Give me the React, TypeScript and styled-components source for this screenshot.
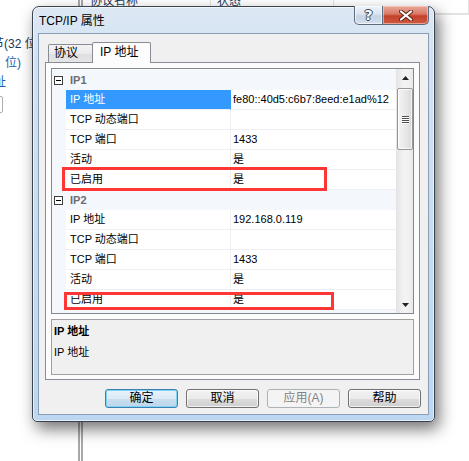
import React from "react";
import styled, { createGlobalStyle, css } from "styled-components";

const GlobalStyle = createGlobalStyle`
  html, body { margin: 0; padding: 0; background: #fff; }
  body { font-family: "Liberation Sans", "Noto Sans CJK SC", sans-serif; }
  * { box-sizing: border-box; }
`;

const CJK = `"Liberation Sans", "Noto Sans CJK SC", sans-serif`;

const Desktop = styled.div`
  position: relative;
  width: 469px;
  height: 461px;
  overflow: hidden;
  background: #fff;
  display: flex;
  font-family: ${CJK};
`;

/* ---------- background window (behind the dialog) ---------- */
const LeftPane = styled.div`
  width: 78px;
  flex: none;
  display: flex;
  flex-direction: column;
  padding-top: 35px;
  font-size: 12px;
`;

const BgLine = styled.div<{ $indent: number; $color: string }>`
  height: 19px;
  line-height: 19px;
  margin-left: ${(p) => p.$indent}px;
  color: ${(p) => p.$color};
  white-space: nowrap;
`;

const BgTextBox = styled.div`
  margin-top: 4px;
  margin-left: -17px;
  width: 20px;
  height: 17px;
  border: 1px solid #abadb3;
  border-radius: 2px;
  background: #fff;
`;

const ListPane = styled.div`
  flex: 1;
  border-left: 5px double #a8a8a8;
  display: flex;
  flex-direction: column;
`;

const ListHeader = styled.div`
  display: flex;
  height: 15px;
  border-bottom: 2px solid #e3e3e3;
`;

const HeaderCell = styled.div<{ $w?: number; $pad: number }>`
  ${(p) => (p.$w ? `width: ${p.$w}px; flex: none;` : "flex: 1;")}
  border-right: 1px solid #e3e3e3;
  padding-left: ${(p) => p.$pad}px;
  font-size: 12px;
  line-height: 2px;
  color: #1e395b;
  white-space: nowrap;
`;

/* ---------- dialog ---------- */
const Dialog = styled.div`
  position: absolute;
  left: 32px;
  top: 6px;
  width: 403px;
  height: 416px;
  border: 1px solid #39444f;
  border-radius: 7px 7px 5px 5px;
  background: linear-gradient(180deg, #dde8f4 0%, #d3e2f2 12%, #c7dcf1 55%, #bcd7f1 100%);
  box-shadow: 4px 7px 16px rgba(0, 0, 0, 0.55), inset 0 0 0 1px rgba(255, 255, 255, 0.6);
  display: flex;
  flex-direction: column;
  padding: 0 5px 6px 5px;
`;

const TitleBar = styled.div`
  height: 26px;
  display: flex;
  align-items: flex-start;
  padding-left: 1px;
`;

const Title = styled.div`
  padding-top: 1px;
  line-height: 26px;
  font-size: 12px;
  color: #000;
`;

const CaptionButtons = styled.div`
  margin-left: auto;
  margin-top: -1px;
  display: flex;
`;

const CaptionButton = styled.div<{ $close?: boolean }>`
  height: 19px;
  width: ${(p) => (p.$close ? 46 : 29)}px;
  display: flex;
  align-items: center;
  justify-content: center;
  border: 1px solid #5d6d80;
  border-top: none;
  ${(p) =>
    p.$close
      ? css`
          border-left: none;
          border-radius: 0 0 5px 0;
          background: linear-gradient(180deg, #e9a99a 0%, #d97865 45%, #c4412a 55%, #d05a41 100%);
          box-shadow: inset 0 0 0 1px rgba(255, 220, 210, 0.55);
        `
      : css`
          border-radius: 0 0 0 5px;
          background: linear-gradient(180deg, #eef3f9 0%, #dbe4ef 45%, #c6d3e3 55%, #d4dfec 100%);
          box-shadow: inset 0 0 0 1px rgba(255, 255, 255, 0.6);
        `}
`;

const HelpGlyph = styled.span`
  font: bold 14px "DejaVu Sans", sans-serif;
  color: #fff;
  line-height: 14px;
  text-shadow: 0 0 1px #3a4656, 1px 0 0 #3a4656, -1px 0 0 #3a4656, 0 1px 0 #3a4656, 0 -1px 0 #3a4656;
`;

const Client = styled.div`
  flex: 1;
  background: #f0f0f0;
  border: 1px solid #8a9db4;
  display: flex;
  flex-direction: column;
`;

const TabControl = styled.div`
  margin: 8px 8px 0 6px;
  height: 338px;
  display: flex;
  flex-direction: column;
`;

const TabStrip = styled.div`
  height: 20px;
  display: flex;
  align-items: flex-end;
  padding-left: 3px;
`;

const Tab = styled.div<{ $active?: boolean; $w: number; $pad: number }>`
  width: ${(p) => p.$w}px;
  padding-left: ${(p) => p.$pad}px;
  border: 1px solid #898c95;
  border-bottom: none;
  border-radius: 2px 2px 0 0;
  font-size: 12px;
  color: #000;
  white-space: nowrap;
  ${(p) =>
    p.$active
      ? css`
          height: 21px;
          line-height: 19px;
          margin-bottom: -1px;
          margin-left: -1px;
          background: #fcfcfc;
          position: relative;
          z-index: 1;
        `
      : css`
          height: 18px;
          line-height: 17px;
          background: linear-gradient(180deg, #f3f3f3 0%, #ebebeb 50%, #dedede 51%, #e5e5e5 100%);
        `}
`;

const TabPanel = styled.div`
  flex: 1;
  border: 1px solid #898c95;
  background: #fcfcfc;
  padding: 5px 5px 4px 5px;
  display: flex;
  flex-direction: column;
  gap: 5px;
`;

const Grid = styled.div`
  position: relative;
  height: 246px;
  border: 1px solid #828790;
  background: #fff;
  display: flex;
  overflow: hidden;
`;

const GridBody = styled.div`
  flex: 1;
  padding-top: 1px;
  display: flex;
  flex-direction: column;
  overflow: hidden;
  font-size: 11px;
`;

const CategoryRow = styled.div`
  height: 20px;
  flex: none;
  display: flex;
  align-items: center;
  background: #f4f7fc;
`;

const Expander = styled.span`
  position: relative;
  width: 9px;
  height: 9px;
  margin-left: 2px;
  margin-right: 5px;
  border: 1px solid #3c3c3c;
  background: #fff;
  flex: none;
  &::after {
    content: "";
    position: absolute;
    left: 1px;
    right: 1px;
    top: 3px;
    height: 1px;
    background: #000;
  }
`;

const CategoryLabel = styled.span`
  margin-left: 2px;
  font-weight: bold;
  color: #6d6d6d;
`;

const PropRow = styled.div`
  height: 20px;
  flex: none;
  display: flex;
`;

const Gutter = styled.div`
  width: 14px;
  flex: none;
  background: #f4f7fc;
`;

const NameCell = styled.div<{ $selected?: boolean }>`
  width: 165px;
  flex: none;
  padding-left: 4px;
  line-height: 19px;
  border-bottom: 1px solid #eef0f4;
  border-right: 1px solid #eef0f4;
  white-space: nowrap;
  color: #000;
  ${(p) =>
    p.$selected &&
    css`
      background: #3399ff;
      color: #fff;
      border-right-color: #3399ff;
    `}
`;

const ValueCell = styled.div`
  flex: 1;
  padding-left: 2px;
  line-height: 19px;
  border-bottom: 1px solid #eef0f4;
  white-space: nowrap;
  color: #000;
`;

const ScrollBar = styled.div`
  width: 17px;
  flex: none;
  display: flex;
  flex-direction: column;
  background: linear-gradient(90deg, #e6e6e6 0%, #f2f2f2 40%, #f2f2f2 70%, #e8e8e8 100%);
  border-left: 1px solid #e4e4e4;
`;

const ArrowBox = styled.div`
  height: 17px;
  flex: none;
  display: flex;
  align-items: center;
  justify-content: center;
`;

const Thumb = styled.div`
  margin: 2px 0 0 0;
  height: 62px;
  flex: none;
  border: 1px solid #979797;
  border-radius: 2px;
  background: linear-gradient(90deg, #f4f4f4 0%, #e9e9e9 50%, #d9d9d9 100%);
  box-shadow: inset 0 0 0 1px rgba(255, 255, 255, 0.7);
  display: flex;
  flex-direction: column;
  align-items: center;
  justify-content: center;
  gap: 1px;
`;

const Grip = styled.span`
  width: 7px;
  height: 1px;
  background: #4f4f4f;
  box-shadow: 0 1px 0 #fff;
`;

const Track = styled.div`
  flex: 1;
`;

const RedBox = styled.div`
  position: absolute;
  border: 3px solid #ff3636;
  pointer-events: none;
`;

const Description = styled.div`
  height: 56px;
  border: 1px solid #a0a0a0;
  background: #f0f0f0;
  padding: 3px 2px 2px 2px;
  font-size: 11px;
  color: #000;
`;

const DescTitle = styled.div`
  line-height: 16px;
  font-weight: bold;
`;

const DescText = styled.div`
  margin-top: 5px;
  line-height: 16px;
`;

const ButtonRow = styled.div`
  margin-top: 9px;
  display: flex;
  justify-content: flex-end;
  gap: 8px;
  padding-right: 7px;
`;

const Button = styled.button<{ $primary?: boolean }>`
  width: 73px;
  height: 19px;
  padding: 0;
  font: 12px ${CJK};
  line-height: 17px;
  color: #000;
  border: 1px solid #707070;
  border-radius: 3px;
  background: linear-gradient(180deg, #f2f2f2 0%, #ebebeb 50%, #dddddd 51%, #cfcfcf 100%);
  box-shadow: inset 0 0 0 1px rgba(255, 255, 255, 0.75);
  ${(p) =>
    p.$primary &&
    css`
      border-color: #3c7fb1;
      background: linear-gradient(180deg, #e9f3fb 0%, #dbeaf6 50%, #c9dfef 51%, #bdd6ea 100%);
      box-shadow: inset 0 0 0 1px #7fd3f5;
    `}
  &:disabled {
    border-color: #adb2b5;
    background: #f4f4f4;
    color: #838383;
    box-shadow: none;
  }
`;

type Prop = { name: string; value: string; selected?: boolean };
type Category = { title: string; props: Prop[] };

const categories: Category[] = [
  {
    title: "IP1",
    props: [
      { name: "IP 地址", value: "fe80::40d5:c6b7:8eed:e1ad%12", selected: true },
      { name: "TCP 动态端口", value: "" },
      { name: "TCP 端口", value: "1433" },
      { name: "活动", value: "是" },
      { name: "已启用", value: "是" },
    ],
  },
  {
    title: "IP2",
    props: [
      { name: "IP 地址", value: "192.168.0.119" },
      { name: "TCP 动态端口", value: "" },
      { name: "TCP 端口", value: "1433" },
      { name: "活动", value: "是" },
      { name: "已启用", value: "是" },
    ],
  },
  { title: "", props: [] },
];

const CloseIcon = () => (
  <svg width="14" height="11" viewBox="0 0 14 11">
    <path d="M2 1.5 L12 9.5 M12 1.5 L2 9.5" stroke="#5a2418" strokeWidth="4" strokeLinecap="round" />
    <path d="M2 1.5 L12 9.5 M12 1.5 L2 9.5" stroke="#fff" strokeWidth="2.2" strokeLinecap="round" />
  </svg>
);

const UpArrow = () => (
  <svg width="7" height="4" viewBox="0 0 7 4">
    <polygon points="3.5,0 7,4 0,4" fill="#222" />
  </svg>
);

const DownArrow = () => (
  <svg width="7" height="4" viewBox="0 0 7 4">
    <polygon points="0,0 7,0 3.5,4" fill="#222" />
  </svg>
);

export default function App() {
  return (
    <>
      <GlobalStyle />
      <Desktop>
        <LeftPane>
          <BgLine $indent={-8} $color="#1b3558">节(32 位</BgLine>
          <BgLine $indent={5} $color="#1d5fb0">位)</BgLine>
          <BgLine $indent={-6} $color="#1d5fb0">址</BgLine>
          <BgTextBox />
        </LeftPane>
        <ListPane>
          <ListHeader>
            <HeaderCell $w={128} $pad={7}>协议名称</HeaderCell>
            <HeaderCell $w={123} $pad={6}>状态</HeaderCell>
            <HeaderCell $pad={6} />
          </ListHeader>
        </ListPane>

        <Dialog>
          <TitleBar>
            <Title>TCP/IP 属性</Title>
            <CaptionButtons>
              <CaptionButton>
                <HelpGlyph>?</HelpGlyph>
              </CaptionButton>
              <CaptionButton $close>
                <CloseIcon />
              </CaptionButton>
            </CaptionButtons>
          </TitleBar>
          <Client>
            <TabControl>
              <TabStrip>
                <Tab $w={45} $pad={5}>协议</Tab>
                <Tab $active $w={59} $pad={7}>IP 地址</Tab>
              </TabStrip>
              <TabPanel>
                <Grid>
                  <GridBody>
                    {categories.map((cat, ci) => (
                      <React.Fragment key={ci}>
                        <CategoryRow>
                          <Expander />
                          {cat.title && <CategoryLabel>{cat.title}</CategoryLabel>}
                        </CategoryRow>
                        {cat.props.map((p, i) => (
                          <PropRow key={ci + "-" + i}>
                            <Gutter />
                            <NameCell $selected={p.selected}>{p.name}</NameCell>
                            <ValueCell>{p.value}</ValueCell>
                          </PropRow>
                        ))}
                      </React.Fragment>
                    ))}
                  </GridBody>
                  <ScrollBar>
                    <ArrowBox>
                      <UpArrow />
                    </ArrowBox>
                    <Thumb>
                      <Grip />
                      <Grip />
                      <Grip />
                      <Grip />
                    </Thumb>
                    <Track />
                    <ArrowBox>
                      <DownArrow />
                    </ArrowBox>
                  </ScrollBar>
                  <RedBox style={{ left: 10, top: 98, width: 265, height: 24 }} />
                  <RedBox style={{ left: 12, top: 223, width: 270, height: 18 }} />
                </Grid>
                <Description>
                  <DescTitle>IP 地址</DescTitle>
                  <DescText>IP 地址</DescText>
                </Description>
              </TabPanel>
            </TabControl>
            <ButtonRow>
              <Button $primary>确定</Button>
              <Button>取消</Button>
              <Button disabled>应用(A)</Button>
              <Button>帮助</Button>
            </ButtonRow>
          </Client>
        </Dialog>
      </Desktop>
    </>
  );
}
